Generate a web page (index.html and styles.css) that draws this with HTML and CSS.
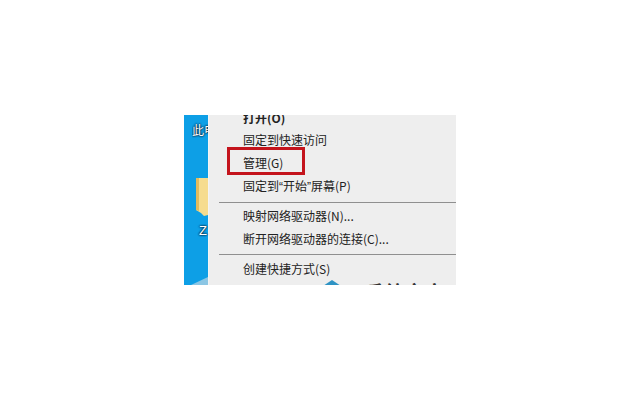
FILE: index.html
```html
<!DOCTYPE html>
<html lang="zh">
<head>
<meta charset="utf-8">
<title>右键菜单</title>
<link rel="stylesheet" href="styles.css">
</head>
<body>
<div class="shot">
  <div class="desktop">
    <span class="pc-label">此电</span>
    <svg class="folder" viewBox="0 0 12 40"><path d="M0 1h12v37l-4 1-3-3-5-3z" fill="#f6dc8e"/><path d="M0 1h3v33l-3-1z" fill="#e3bb5c"/></svg>
    <span class="z-label">Z</span>
    <svg class="drive" viewBox="0 0 24 8"><path d="M7 8l17-8v8z" fill="#8cc6e4"/></svg>
  </div>
  <div class="menu">
    <div class="item bold first">打开(O)</div>
    <div class="item">固定到快速访问</div>
    <div class="item">管理(G)</div>
    <div class="item">固定到<span class="q">“</span>开始<span class="q">”</span>屏幕(P)</div>
    <div class="sep sep-wide"></div>
    <div class="item">映射网络驱动器(N)...</div>
    <div class="item">断开网络驱动器的连接(C)...</div>
    <div class="sep"></div>
    <div class="item">创建快捷方式(S)</div>
  </div>
  <div class="highlight"></div>
  <svg class="mark" viewBox="0 0 24 8"><path d="M0 8L12 0l12 8z" fill="#2e93c4"/></svg>
  <span class="brand">系统之家</span>
</div>
</body>
</html>
```
FILE: styles.css
```css
html, body {
  margin: 0;
  padding: 0;
  background: #fff;
}
body {
  padding: 115px 0 0 184px;
}
.shot {
  position: relative;
  display: flex;
  width: 272px;
  height: 170px;
  overflow: hidden;
  font-family: "Noto Sans CJK SC", "Liberation Sans", sans-serif;
  color: #222;
}
.desktop {
  position: relative;
  width: 24px;
  background: #0d9fe6;
  flex: none;
}
.pc-label {
  position: absolute;
  left: 8px;
  top: 7px;
  width: 16px;
  overflow: hidden;
  white-space: nowrap;
  font-size: 12px;
  line-height: 16px;
  color: #fff;
  text-shadow: 0 0 2px #012, 0 0 2px #012;
}
.folder {
  position: absolute;
  left: 12px;
  top: 62px;
  width: 12px;
  height: 40px;
}
.z-label {
  position: absolute;
  left: 15px;
  top: 108px;
  font: 13px/16px "Liberation Sans", sans-serif;
  color: #fff;
  text-shadow: 0 0 2px #012, 0 0 2px #012;
}
.drive {
  position: absolute;
  left: 0;
  bottom: 0;
  width: 24px;
  height: 8px;
}
.menu {
  flex: 1;
  background: #eeeeee;
  border-left: 1px solid #f4f4f4;
}
.item {
  height: 23px;
  line-height: 23px;
  padding-left: 34px;
  font-size: 12px;
  white-space: nowrap;
}
.first {
  height: 13px;
  line-height: 6px;
}
.bold {
  font-weight: 700;
}
.q {
  font-family: "Liberation Sans", sans-serif;
}
.sep {
  height: 1px;
  margin: 4px 0 2px 10px;
  background: #8f8f8f;
}
.sep-wide {
  margin-top: 5px;
  margin-bottom: 1px;
}
.highlight {
  position: absolute;
  left: 43px;
  top: 32px;
  width: 78px;
  height: 28px;
  box-sizing: border-box;
  border: 3px solid #c4141c;
}
.mark {
  position: absolute;
  left: 136px;
  top: 165px;
  width: 24px;
  height: 8px;
}
.brand {
  position: absolute;
  left: 181px;
  top: 165px;
  font-size: 19px;
  line-height: 24px;
  font-weight: 700;
  letter-spacing: 1px;
  color: #333;
}
```
